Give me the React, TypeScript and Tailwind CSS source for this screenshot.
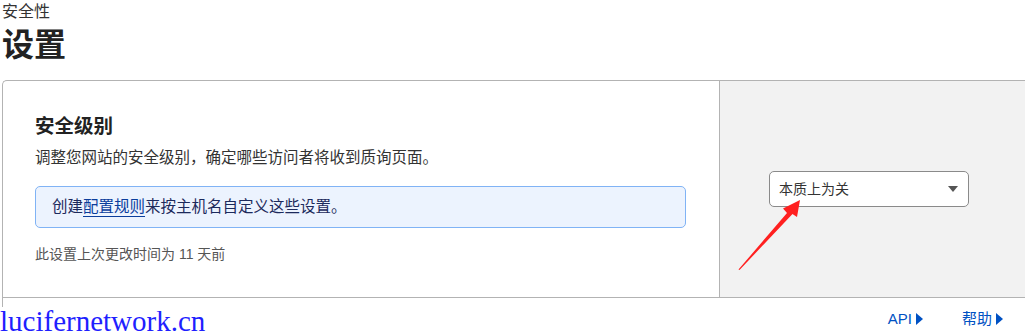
const FONT = "font-['Liberation_Sans','Noto_Sans_CJK_SC',sans-serif]";

const Caret = () => (
  <svg width="9" height="14" viewBox="0 0 9 14" className="ml-[3px] inline-block">
    <path d="M1 1 L8 7 L1 13 Z" fill="#0051c3" />
  </svg>
);

const SecurityLevelCard = () => (
  <div className="ml-[2px] rounded-tl-[5px] border-l border-t border-[#b3b3b3]">
    <div className="flex h-[217px] border-b border-[#b3b3b3]">
      <div className="w-[716px] shrink-0 pl-[32px] pt-[31px]">
        <h2 className="text-[19.5px] font-bold leading-[28px] text-[#222]">安全级别</h2>
        <p className="mt-[7px] text-[15.5px] leading-[22px] text-[#333]">
          调整您网站的安全级别，确定哪些访问者将收到质询页面。
        </p>
        <div className="mt-[17px] flex h-[42px] w-[651px] items-center rounded-[5px] border border-[#80b3f5] bg-[#ecf3fe] pl-[16px] text-[15.5px] text-[#1c2a5c]">
          创建
          <a className="text-[#0a3d9c] underline decoration-[#0a3d9c] underline-offset-[4px]">配置规则</a>
          来按主机名自定义这些设置。
        </div>
        <p className="mt-[16px] text-[14px] leading-[20px] text-[#555]">此设置上次更改时间为 11 天前</p>
      </div>
      <div className="flex flex-1 items-center border-l border-[#b3b3b3] bg-[#f2f2f2] pl-[49px]">
        <div className="flex h-[36px] w-[200px] items-center justify-between rounded-[5px] border border-[#8a8a8a] bg-white pl-[9px] pr-[10px] text-[14px] text-[#333]">
          <span>本质上为关</span>
          <svg width="10" height="6" viewBox="0 0 10 6">
            <path d="M0 0 L10 0 L5 6 Z" fill="#555" />
          </svg>
        </div>
      </div>
    </div>
    <div className="flex h-[42px] items-center justify-end gap-[38px] pr-[21px] text-[15px] text-[#0051c3]">
      <a className="flex items-center">API<Caret /></a>
      <a className="flex items-center">帮助<Caret /></a>
    </div>
  </div>
);

export default function App() {
  return (
    <div className={`relative h-[336px] w-[1025px] overflow-hidden bg-white ${FONT}`}>
      <div className="pl-[2px] pt-[1px] text-[16px] leading-[22px] text-[#333]">安全性</div>
      <h1 className="pl-[2px] text-[32px] font-bold leading-[44px] text-[#222]">设置</h1>
      <div className="mt-[13px]">
        <SecurityLevelCard />
      </div>

      {/* annotation arrow */}
      <svg className="pointer-events-none absolute left-0 top-0" width="1025" height="336">
        <path d="M738.5 269.5 L787 213 L783 208.5 L800 200 L797 217 L792.5 214 L739.5 270 Z" fill="#ff2020" />
      </svg>

      {/* watermark */}
      <div className="absolute bottom-0 left-0 bg-white pr-[2px] font-['Liberation_Serif',serif] text-[29px] leading-[29px] text-[#1f1fff]">
        lucifernetwork.cn
      </div>
    </div>
  );
}
